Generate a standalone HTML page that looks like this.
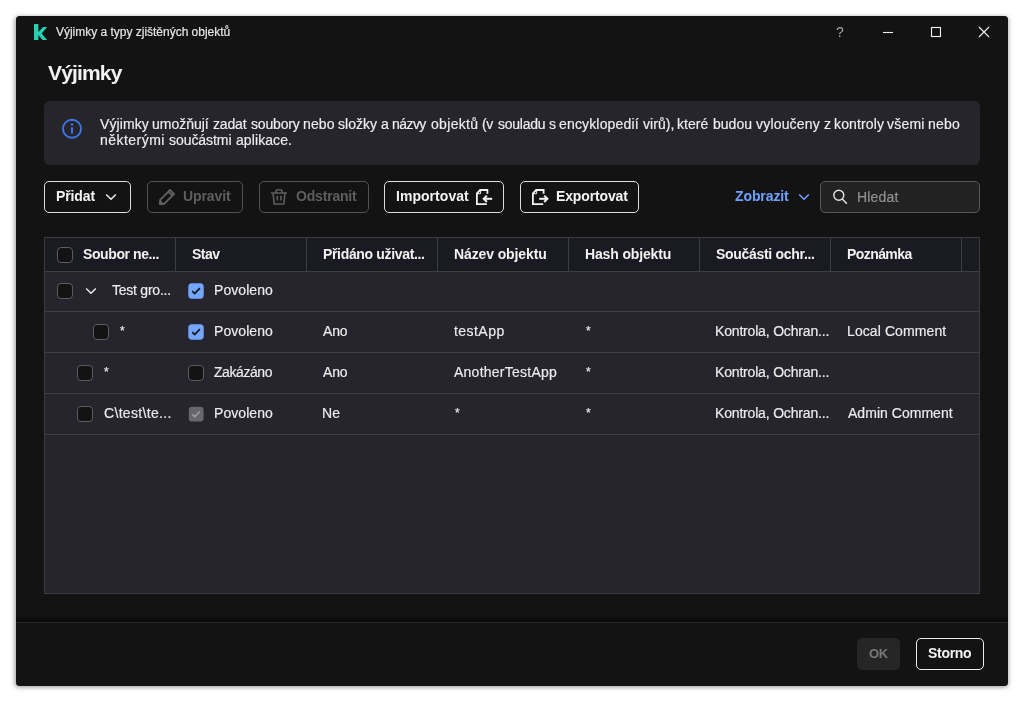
<!DOCTYPE html>
<html lang="cs">
<head>
<meta charset="utf-8">
<title>Výjimky a typy zjištěných objektů</title>
<style>
*{box-sizing:border-box;margin:0;padding:0}
html,body{width:1024px;height:702px;background:#fff;overflow:hidden}
body{font-family:"Liberation Sans",sans-serif;color:#f0f0f0;position:relative}
.win{position:absolute;left:16px;top:16px;width:992px;height:670px;background:#131313;border-radius:3.5px;box-shadow:-0.5px 1px 5px rgba(0,0,0,.42)}
.abs{position:absolute;white-space:nowrap}
.ttl,.h1,.iw,.bt,.link,.ph,.th,.td,.ok,.storno,.q{will-change:transform}
svg{position:absolute;overflow:visible}
.ttl{font-size:12px;line-height:16px;color:#e6e6e6}
.h1{font-size:21px;line-height:28px;font-weight:bold;color:#f2f2f2}
.info{left:44px;top:101px;width:936px;height:64px;background:#25252b;border-radius:6px}
.iw{font-size:14px;line-height:16px;color:#ededed}
.infotxt{position:absolute;left:0;top:0;width:0;height:0}
.btn{top:181px;height:32px;border:1px solid #dedede;border-radius:5px}
.btn.dis{border-color:#525252}
.bt{font-weight:bold;font-size:14px;line-height:16px;color:#f4f4f4}
.bt.dis{color:#5e5e5e}
.bt.okc{color:#777}
.link{color:#6ea2ff;font-weight:bold;font-size:14px;line-height:16px}
.ph{font-size:14px;line-height:16px;color:#929292}
.search{left:820px;top:181px;width:160px;height:32px;background:#222;border:1px solid #585858;border-radius:5px}
.tbl{left:44px;top:237px;width:936px;height:357px;background:#26252e;border:1px solid #3c3c40}
.thead{left:45px;top:238px;width:934px;height:33px;background:#1a1a22}
.hline{left:45px;width:934px;height:1px;background:#3d3d45}
.vline{top:238px;width:1px;height:33px;background:#3d3d45}
.th{font-size:14px;line-height:16px;font-weight:bold;color:#f2f2f2}
.td{font-size:14px;line-height:16px;color:#ececec}
.cb{width:16px;height:16px;border:1px solid #5c5c5c;border-radius:4px;background:#131313}
.footsh{left:16px;top:613px;width:992px;height:9px;background:linear-gradient(to bottom,rgba(0,0,0,0),rgba(0,0,0,.45))}
.foot{left:16px;top:622px;width:992px;height:1px;background:#262626}
.ok{left:857px;top:638px;width:43px;height:32px;border-radius:5px;background:#262626;color:#777;font-weight:bold;font-size:14px;line-height:32px;text-align:center}
.storno{left:916px;top:638px;width:68px;height:32px;border-radius:5px;border:1px solid #ececec;color:#f6f6f6;font-weight:bold;font-size:14px;line-height:30px;text-align:center}
.td,.iw,.ph,.ttl{-webkit-text-stroke:0.18px currentColor}
</style>
</head>
<body>
<div class="win"></div>
<!-- title bar -->
<svg style="left:33px;top:24px" width="14" height="16" viewBox="0 0 14 16"><path d="M1 0H5.4V8L10.2 3H14.2L8.6 9.4L14.2 16H9.6L5.4 11.2V16H1Z" fill="#25d1ae"/></svg>
<div class="abs q" style="left:836px;top:24px;font-size:14px;line-height:16px;color:#a4a4a4">?</div>
<svg style="left:878px;top:22px" width="120" height="20" viewBox="0 0 120 20" fill="none" stroke="#f0f0f0" stroke-width="1.1"><path d="M5 10.5H15"/><rect x="53.5" y="5.5" width="9" height="9"/><path d="M101 5L111 15M111 5L101 15"/></svg>
<!-- info -->
<div class="abs info"></div>
<svg style="left:62px;top:119px" width="20" height="20" viewBox="0 0 20 20"><circle cx="10" cy="9.8" r="9" fill="none" stroke="#3f74e8" stroke-width="1.9"/><rect x="9" y="8.3" width="2" height="6.2" fill="#3f74e8"/><circle cx="10" cy="5.6" r="1.25" fill="#3f74e8"/></svg>
<!-- toolbar -->
<div class="abs btn" style="left:44px;width:87px"></div>
<svg style="left:105px;top:193px" width="12" height="8" viewBox="0 0 12 8"><path d="M1.2 1.4L6 6.3L10.8 1.4" fill="none" stroke="#f0f0f0" stroke-width="1.5"/></svg>
<div class="abs btn dis" style="left:147px;width:96px"></div>
<svg style="left:159px;top:189px" width="16" height="16" viewBox="0 0 16 16" fill="none" stroke="#606060" stroke-width="1.8" stroke-linejoin="round"><path d="M11 1L15 5L5.2 14.8L0.8 15.2L1.2 10.8Z"/><path d="M9.6 2.9L13.1 6.4"/><path d="M1.2 12.2L3.8 14.8L0.9 15.1Z" fill="#5e5e5e"/></svg>
<div class="abs btn dis" style="left:259px;width:110px"></div>
<svg style="left:271px;top:189px" width="16" height="16" viewBox="0 0 16 16" fill="none" stroke="#5e5e5e" stroke-width="1.6"><path d="M0 4H16"/><path d="M5 4V2.5Q5 0.8 6.7 0.8H9.3Q11 0.8 11 2.5V4"/><path d="M2.1 4.6L3.2 15H12.8L13.9 4.6"/><path d="M6.3 6.8V11.6M9.9 6.8V11.6"/></svg>
<div class="abs btn" style="left:384px;width:120px"></div>
<svg style="left:476px;top:189px" width="16" height="16" viewBox="0 0 16 16" fill="none" stroke="#f2f2f2" stroke-width="1.8"><path d="M11.4 4.8V1H4.2L0.9 4.3V15.1H10.8"/><path d="M4.6 1V4.7H0.9" stroke-width="1"/><path d="M16.2 9.8H8.4" stroke-width="2"/><path d="M10.9 6.6L7.7 9.8L10.9 13" stroke-width="2"/></svg>
<div class="abs btn" style="left:520px;width:119px"></div>
<svg style="left:532px;top:189px" width="16" height="16" viewBox="0 0 16 16" fill="none" stroke="#f2f2f2" stroke-width="1.8"><path d="M11.6 4.8V1H4.2L0.9 4.3V15.1H11.2"/><path d="M4.6 1V4.7H0.9" stroke-width="1"/><path d="M7.2 9.8H14.6" stroke-width="2"/><path d="M12.2 6.6L15.4 9.8L12.2 13" stroke-width="2"/></svg>
<svg style="left:798px;top:193px" width="12" height="8" viewBox="0 0 12 8"><path d="M1.2 1.4L6 6.3L10.8 1.4" fill="none" stroke="#6ea2ff" stroke-width="1.5"/></svg>
<div class="abs search"></div>
<svg style="left:832px;top:189px" width="16" height="16" viewBox="0 0 16 16" fill="none" stroke="#e0e0e0" stroke-width="1.5"><circle cx="6.8" cy="6.3" r="5"/><path d="M10.3 10L14.8 14.8"/></svg>
<!-- table -->
<div class="abs tbl"></div>
<div class="abs thead"></div>
<div class="abs hline" style="top:271px"></div>
<div class="abs hline" style="top:311px"></div>
<div class="abs hline" style="top:352px"></div>
<div class="abs hline" style="top:393px"></div>
<div class="abs hline" style="top:434px"></div>
<div class="abs vline" style="left:175px"></div>
<div class="abs vline" style="left:306px"></div>
<div class="abs vline" style="left:437px"></div>
<div class="abs vline" style="left:568px"></div>
<div class="abs vline" style="left:699px"></div>
<div class="abs vline" style="left:830px"></div>
<div class="abs vline" style="left:961px"></div>
<div class="abs cb" style="left:57px;top:247px"></div>
<div class="abs cb" style="left:57px;top:283px"></div>
<svg style="left:188px;top:283px" width="16" height="16" viewBox="0 0 16 16"><rect x="0.3" y="0.3" width="15.4" height="15.4" rx="3.6" fill="#73a6ff"/><path d="M4.2 8.2L6.7 10.6L11.9 5.2" fill="none" stroke="#15151a" stroke-width="1.7"/></svg>
<svg style="left:85px;top:287px" width="12" height="8" viewBox="0 0 12 8"><path d="M1.2 1.4L6 6.3L10.8 1.4" fill="none" stroke="#e8e8e8" stroke-width="1.5"/></svg>
<div class="abs cb" style="left:93px;top:324px"></div>
<svg style="left:188px;top:324px" width="16" height="16" viewBox="0 0 16 16"><rect x="0.3" y="0.3" width="15.4" height="15.4" rx="3.6" fill="#73a6ff"/><path d="M4.2 8.2L6.7 10.6L11.9 5.2" fill="none" stroke="#15151a" stroke-width="1.7"/></svg>
<div class="abs cb" style="left:77px;top:365px"></div>
<div class="abs cb" style="left:188px;top:365px"></div>
<div class="abs cb" style="left:77px;top:406px"></div>
<svg style="left:188px;top:406px" width="16" height="16" viewBox="0 0 16 16"><rect x="0.8" y="0.8" width="14.8" height="14.8" rx="3.4" fill="#66666b"/><path d="M4.4 8.4L6.8 10.7L11.8 5.5" fill="none" stroke="#a0a0a4" stroke-width="1.6"/></svg>
<!-- footer -->
<div class="abs footsh"></div>
<div class="abs foot"></div>
<div class="abs ok"></div>
<div class="abs storno"></div>
<div class="abs ttl" id="ttl" style="left:56.2px;top:24px;letter-spacing:-0.016px;">Výjimky a typy zjištěných objektů</div>
<div class="abs h1" id="hd" style="left:48.2px;top:59px;letter-spacing:-0.833px;">Výjimky</div>
<div class="abs bt" id="b1" style="left:56.2px;top:188px;letter-spacing:-0.120px;">Přidat</div>
<div class="abs bt dis" id="b2" style="left:182.7px;top:188px;letter-spacing:-0.083px;">Upravit</div>
<div class="abs bt dis" id="b3" style="left:295.7px;top:188px;letter-spacing:-0.188px;">Odstranit</div>
<div class="abs bt" id="b4" style="left:395.5px;top:188px;letter-spacing:0.044px;">Importovat</div>
<div class="abs bt" id="b5" style="left:555.5px;top:188px;letter-spacing:-0.144px;">Exportovat</div>
<div class="abs link" id="zob" style="left:734.9px;top:188px;letter-spacing:-0.100px;">Zobrazit</div>
<div class="abs ph" id="hl" style="left:857.2px;top:189px;letter-spacing:0.200px;">Hledat</div>
<div class="abs bt okc" id="okt" style="left:869.3px;top:646px;letter-spacing:-0.250px;font-size:13px;">OK</div>
<div class="abs bt" id="stt" style="left:928.4px;top:645px;letter-spacing:-0.300px;">Storno</div>
<div class="abs th" id="th0" style="left:83.3px;top:246px;letter-spacing:-0.400px;">Soubor ne...</div>
<div class="abs th" id="th1" style="left:192.4px;top:246px;letter-spacing:-0.533px;">Stav</div>
<div class="abs th" id="th2" style="left:322.6px;top:246px;letter-spacing:-0.338px;">Přidáno uživat...</div>
<div class="abs th" id="th3" style="left:453.9px;top:246px;letter-spacing:-0.117px;">Název objektu</div>
<div class="abs th" id="th4" style="left:584.8px;top:246px;letter-spacing:-0.145px;">Hash objektu</div>
<div class="abs th" id="th5" style="left:716.45px;top:246px;letter-spacing:-0.300px;">Součásti ochr...</div>
<div class="abs th" id="th6" style="left:846.7px;top:246px;letter-spacing:-0.571px;">Poznámka</div>
<div class="abs td" id="r1a" style="left:112.0px;top:282px;letter-spacing:-0.240px;">Test gro...</div>
<div class="abs td" id="r1b" style="left:213.5px;top:282px;letter-spacing:0.057px;">Povoleno</div>
<div class="abs td" id="r2a" style="left:119.8px;top:323px;font-size:12px;">*</div>
<div class="abs td" id="r2b" style="left:213.5px;top:323px;letter-spacing:0.057px;">Povoleno</div>
<div class="abs td" id="r2c" style="left:323.0px;top:323px;letter-spacing:-0.150px;">Ano</div>
<div class="abs td" id="r2d" style="left:454.2px;top:323px;letter-spacing:0.450px;">testApp</div>
<div class="abs td" id="r2e" style="left:586.2px;top:323px;font-size:12px;">*</div>
<div class="abs td" id="r2f" style="left:715.45px;top:323px;letter-spacing:-0.178px;">Kontrola, Ochran...</div>
<div class="abs td" id="r2g" style="left:846.7px;top:323px;letter-spacing:0.092px;">Local Comment</div>
<div class="abs td" id="r3a" style="left:103.9px;top:364px;font-size:12px;">*</div>
<div class="abs td" id="r3b" style="left:214.2px;top:364px;letter-spacing:-0.429px;">Zakázáno</div>
<div class="abs td" id="r3c" style="left:323.0px;top:364px;letter-spacing:-0.150px;">Ano</div>
<div class="abs td" id="r3d" style="left:454.2px;top:364px;letter-spacing:0.246px;">AnotherTestApp</div>
<div class="abs td" id="r3e" style="left:586.2px;top:364px;font-size:12px;">*</div>
<div class="abs td" id="r3f" style="left:715.45px;top:364px;letter-spacing:-0.178px;">Kontrola, Ochran...</div>
<div class="abs td" id="r4a" style="left:103.5px;top:405px;letter-spacing:0.327px;">C\test\te...</div>
<div class="abs td" id="r4b" style="left:213.5px;top:405px;letter-spacing:0.057px;">Povoleno</div>
<div class="abs td" id="r4c" style="left:322.0px;top:405px;letter-spacing:0.200px;">Ne</div>
<div class="abs td" id="r4d" style="left:455.2px;top:405px;font-size:12px;">*</div>
<div class="abs td" id="r4e" style="left:586.2px;top:405px;font-size:12px;">*</div>
<div class="abs td" id="r4f" style="left:715.45px;top:405px;letter-spacing:-0.178px;">Kontrola, Ochran...</div>
<div class="abs td" id="r4g" style="left:847.7px;top:405px;letter-spacing:0.033px;">Admin Comment</div>
<div class="infotxt"><span class="abs iw" id="i1_0" style="left:100.0px;top:116px;letter-spacing:0.083px;">Výjimky</span> <span class="abs iw" id="i1_1" style="left:152.45px;top:116px;letter-spacing:-0.021px;">umožňují</span> <span class="abs iw" id="i1_2" style="left:213.4px;top:116px;letter-spacing:-0.150px;">zadat</span> <span class="abs iw" id="i1_3" style="left:250.9px;top:116px;letter-spacing:-0.158px;">soubory</span> <span class="abs iw" id="i1_4" style="left:303.0px;top:116px;letter-spacing:0.100px;">nebo</span> <span class="abs iw" id="i1_5" style="left:338.4px;top:116px;letter-spacing:0.010px;">složky</span> <span class="abs iw" id="i1_6" style="left:381.3px;top:116px;">a</span> <span class="abs iw" id="i1_7" style="left:391.7px;top:116px;letter-spacing:-0.562px;">názvy</span> <span class="abs iw" id="i1_8" style="left:431.1px;top:116px;letter-spacing:0.317px;">objektů</span> <span class="abs iw" id="i1_9" style="left:482.1px;top:116px;letter-spacing:-0.500px;">(v</span> <span class="abs iw" id="i1_10" style="left:497.7px;top:116px;letter-spacing:-0.250px;">souladu</span> <span class="abs iw" id="i1_11" style="left:549.1px;top:116px;">s</span> <span class="abs iw" id="i1_12" style="left:559.2px;top:116px;letter-spacing:0.159px;">encyklopedií</span> <span class="abs iw" id="i1_13" style="left:643.0px;top:116px;letter-spacing:0.060px;">virů),</span> <span class="abs iw" id="i1_14" style="left:677.4px;top:116px;letter-spacing:0.050px;">které</span> <span class="abs iw" id="i1_15" style="left:713.3px;top:116px;letter-spacing:0.025px;">budou</span> <span class="abs iw" id="i1_16" style="left:756.1px;top:116px;letter-spacing:0.188px;">vyloučeny</span> <span class="abs iw" id="i1_17" style="left:824.2px;top:116px;">z</span> <span class="abs iw" id="i1_18" style="left:833.6px;top:116px;letter-spacing:0.143px;">kontroly</span> <span class="abs iw" id="i1_19" style="left:887.4px;top:116px;letter-spacing:0.200px;">všemi</span> <span class="abs iw" id="i1_20" style="left:927.95px;top:116px;letter-spacing:0.217px;">nebo</span> <span class="abs iw" id="i2_0" style="left:99.6px;top:132px;letter-spacing:0.475px;">některými</span> <span class="abs iw" id="i2_1" style="left:168.7px;top:132px;letter-spacing:-0.062px;">součástmi</span> <span class="abs iw" id="i2_2" style="left:235.9px;top:132px;letter-spacing:0.087px;">aplikace.</span></div>
</body>
</html>
